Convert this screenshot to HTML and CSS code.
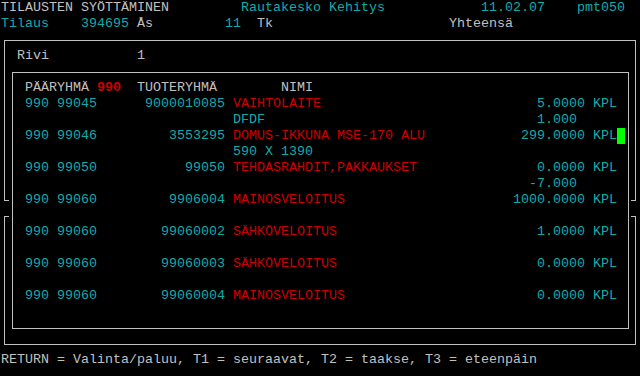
FILE: index.html
```html
<!DOCTYPE html>
<html lang="fi">
<head>
    <meta charset="UTF-8">
    <meta name="viewport" content="width=device-width, initial-scale=1.0">
    <title>Tilausten syöttäminen</title>
    <link rel="stylesheet" href="styles.css">
</head>
<body>
    <div class="screen">
        <div class="frame outer-top"></div>
        <div class="frame outer-bottom"></div>
        <div class="frame inner"></div>

        <div class="row"><span class="w">TILAUSTEN SYÖTTÄMINEN</span>         <span class="c">Rautakesko Kehitys</span>            <span class="c">11.02.07</span>    <span class="c">pmt050</span></div>
        <div class="row"><span class="c">Tilaus    394695</span> <span class="w">Ås</span>         <span class="c">11</span>  <span class="w">Tk</span>                      <span class="w">Yhteensä</span></div>
        <div class="row"></div>
        <div class="row"><span class="w">  Rivi           1</span></div>
        <div class="row"></div>
        <div class="row">   <span class="w">PÄÄRYHMÄ</span> <span class="r b">990</span>  <span class="w">TUOTERYHMÄ</span>        <span class="w">NIMI</span></div>
        <div class="row">   <span class="c">990 99045      9000010085</span> <span class="r">VAIHTOLAITE</span>                           <span class="c">5.0000 KPL</span></div>
        <div class="row">                             <span class="c">DFDF</span>                                  <span class="c">1.000</span></div>
        <div class="row">   <span class="c">990 99046         3553295</span> <span class="r">DOMUS-IKKUNA MSE-170 ALU</span>            <span class="c">299.0000 KPL</span><span class="cursor"></span></div>
        <div class="row">                             <span class="c">590 X 1390</span></div>
        <div class="row">   <span class="c">990 99050           99050</span> <span class="r">TEHDASRAHDIT,PAKKAUKSET</span>               <span class="c">0.0000 KPL</span></div>
        <div class="row">                                                                  <span class="c">-7.000</span></div>
        <div class="row">   <span class="c">990 99060         9906004</span> <span class="r">MAINOSVELOITUS</span>                     <span class="c">1000.0000 KPL</span></div>
        <div class="row"></div>
        <div class="row">   <span class="c">990 99060        99060002</span> <span class="r">SÄHKÖVELOITUS</span>                         <span class="c">1.0000 KPL</span></div>
        <div class="row"></div>
        <div class="row">   <span class="c">990 99060        99060003</span> <span class="r">SÄHKÖVELOITUS</span>                         <span class="c">0.0000 KPL</span></div>
        <div class="row"></div>
        <div class="row">   <span class="c">990 99060        99060004</span> <span class="r">MAINOSVELOITUS</span>                        <span class="c">0.0000 KPL</span></div>
        <div class="row"></div>
        <div class="row"></div>
        <div class="row"></div>
        <div class="row"><span class="w">RETURN = Valinta/paluu, T1 = seuraavat, T2 = taakse, T3 = eteenpäin</span></div>
    </div>
</body>
</html>
```

FILE: styles.css
```css
body {
    margin: 0;
    background: #000;
}
.screen {
    position: relative;
    width: 640px;
    height: 376px;
    overflow: hidden;
    background: #000;
    font-family: "Liberation Mono", "DejaVu Sans Mono", monospace;
    font-size: 13.333px;
    color: #c0c0c0;
}
.row {
    height: 16px;
    padding-left: 1px;
    line-height: 16px;
    white-space: pre;
}
.w {
    color: #c0c0c0;
}
.c {
    color: #10acac;
}
.r {
    color: #cc0000;
}
.b {
    font-weight: bold;
}
.cursor {
    display: inline-block;
    width: 8px;
    height: 16px;
    vertical-align: top;
    background: #00ff00;
}

/* box lines drawn over the character grid */
.frame {
    position: absolute;
    box-sizing: border-box;
    border: 1px solid #c0c0c0;
}
.outer-top {
    left: 4px;
    top: 40px;
    width: 632px;
    height: 161px;
    border-bottom: 0;
}
.outer-bottom {
    left: 4px;
    top: 216px;
    width: 632px;
    height: 129px;
    border-top: 0;
}
.outer-top::before,
.outer-top::after,
.outer-bottom::before,
.outer-bottom::after {
    content: "";
    position: absolute;
    width: 5px;
    height: 1px;
    background: #c0c0c0;
}
.outer-top::before {
    left: -1px;
    bottom: 0;
}
.outer-top::after {
    right: -1px;
    bottom: 0;
}
.outer-bottom::before {
    left: -1px;
    top: 0;
}
.outer-bottom::after {
    right: -1px;
    top: 0;
}
.inner {
    left: 12px;
    top: 72px;
    width: 617px;
    height: 257px;
}
```
